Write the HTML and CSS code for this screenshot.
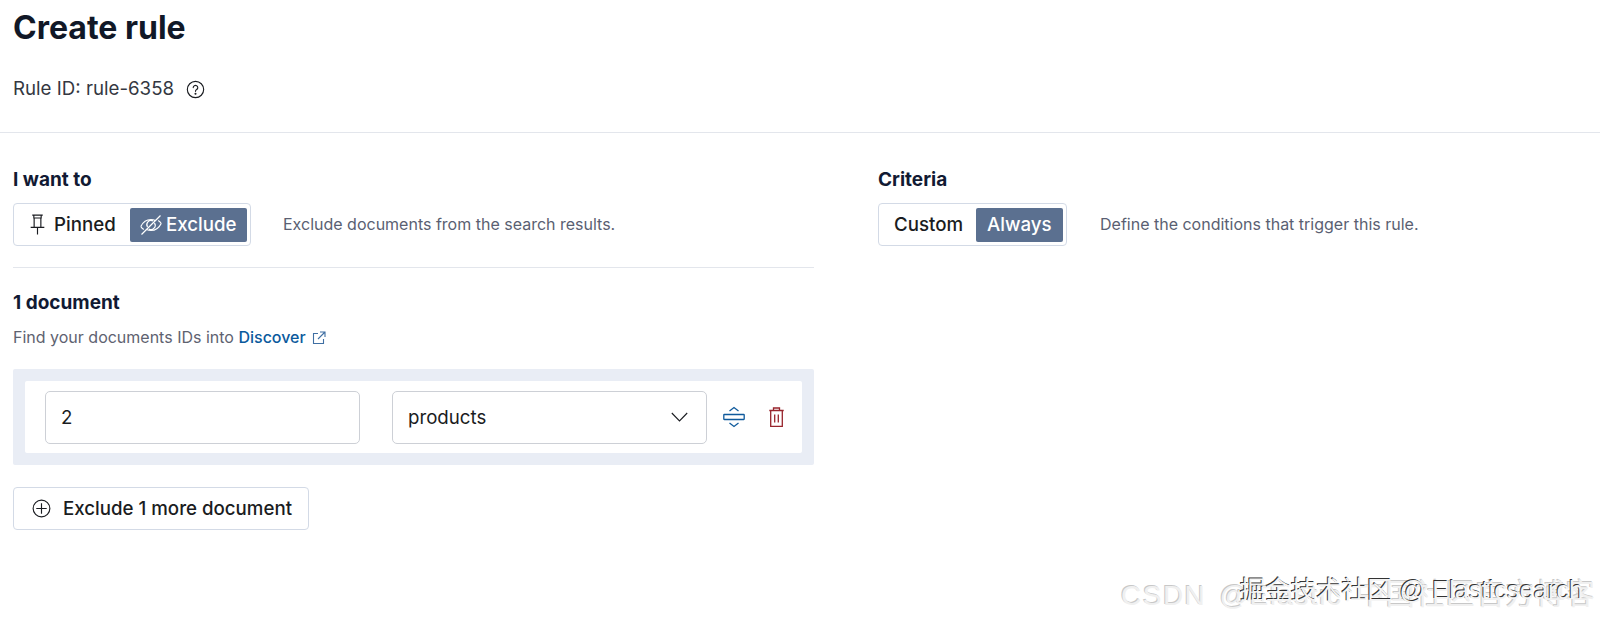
FILE: index.html
```html
<!DOCTYPE html>
<html lang="en">
<head>
<meta charset="utf-8">
<title>Create rule</title>
<link rel="stylesheet" href="styles.css">
</head>
<body>
<header class="page-header">
  <h1 class="title">Create rule</h1>
  <div class="rule-id">
    <span>Rule ID: rule-6358</span>
    <svg class="icon-help" viewBox="0 0 20 20" fill="none" stroke="#1a1c21" stroke-width="1.2"><circle cx="10" cy="10" r="8.6"/><path d="M7.6 8a2.4 2.4 0 1 1 3.6 2.1c-.8.5-1.200.9-1.200 1.800" stroke-linecap="round"/><circle cx="10" cy="14.400" r=".5" fill="#1a1c21"/></svg>
  </div>
</header>
<main class="columns">
  <section class="col-left">
    <h2 class="label">I want to</h2>
    <div class="choice-row">
      <div class="group">
        <span class="opt opt-pinned">
          <svg class="icon-pin" viewBox="0 0 14 20" fill="none" stroke="#1a1c21" stroke-width="1.100"><path d="M2 1h10M3.500 1v2.800h7V1M3.800 3.800v8.400M10.200 3.800v8.400M.5 12.700h13M7 12.700V19.500"/></svg>
          Pinned
        </span>
        <span class="opt selected opt-exclude">
          <svg class="icon-eye" viewBox="0 0 22 20" fill="none" stroke="#fff" stroke-width="1.200"><path d="M.8 11.500C3 7 7 4.500 11 4.500c1.500 0 3 .3 4.300 1M21.200 8.500C19 13 15 15.500 11 15.500c-1.500 0-3-.3-4.300-1M.8 11.500c.7 1.300 1.800 2.300 3 3.100M21.200 8.500c-.7-1.300-1.800-2.300-3-3.100M7.500 12a4.200 4.200 0 0 1 5.500-6M14.500 8a4.200 4.200 0 0 1-5.500 6M1.500 19.500 20.500.5"/></svg>
          Exclude
        </span>
      </div>
      <p class="hint">Exclude documents from the search results.</p>
    </div>
    <hr class="rule">
    <h2 class="label doc-label">1 document</h2>
    <p class="find">Find your documents IDs into <a class="link" href="#">Discover</a>
      <svg class="icon-ext" viewBox="0 0 14 14" fill="none" stroke="#3f6fa3" stroke-width="1.100"><path d="M6 2.500H1.500v10h10V8M8 1h5v5M13 1 6 8"/></svg>
    </p>
    <div class="panel">
      <div class="panel-inner">
        <div class="field">2</div>
        <div class="field field-select">
          <span>products</span>
          <svg class="icon-chev" viewBox="0 0 17 10" fill="none" stroke="#1a1c21" stroke-width="1.100"><path d="M.8 1l7.700 8 7.700-8"/></svg>
        </div>
        <svg class="icon-split" viewBox="0 0 22 22" fill="none" stroke="#0f5a9c" stroke-width="1.300"><path d="M6.500 5 11 1.500 15.500 5M6.500 17 11 20.500 15.500 17"/><rect x=".8" y="8.500" width="20.400" height="5" rx=".5"/></svg>
        <svg class="icon-trash" viewBox="0 0 15 20" fill="none" stroke="#98242c" stroke-width="1.300"><path d="M4.500 3V1h6v2M.3 3.500h14.400M1.700 3.500v15.800h11.600V3.500M5.700 7.500v8M9.300 7.500v8"/></svg>
      </div>
    </div>
    <button class="add-btn" type="button">
      <svg class="icon-plus" viewBox="0 0 20 20" fill="none" stroke="#1a1c21" stroke-width="1.200"><circle cx="10" cy="10" r="8.800"/><path d="M10 4.500v11M4.500 10h11"/></svg>
      Exclude 1 more document
    </button>
  </section>
  <section class="col-right">
    <h2 class="label">Criteria</h2>
    <div class="choice-row">
      <div class="group">
        <span class="opt opt-custom">Custom</span>
        <span class="opt selected opt-always">Always</span>
      </div>
      <p class="hint hint-right">Define the conditions that trigger this rule.</p>
    </div>
  </section>
</main>
<div class="wm wm-back">CSDN @Elastic <span class="wm-cjk">中国社区官方博客</span></div>
<div class="wm wm-front">掘金技术社区 @ Elasticsearch</div>
</body>
</html>
```
FILE: styles.css
```css
* { box-sizing: border-box; }
html, body { margin: 0; height: 623px; overflow: hidden; }
body {
  position: relative;
  background: #fff;
  color: #1a1c21;
  font-family: Inter, "Noto Sans CJK SC", sans-serif;
}
.page-header {
  height: 133px;
  padding: 8px 13px 0;
  border-bottom: 1px solid #e3e6ec;
}
.title {
  margin: 0;
  font-size: 32px;
  line-height: 40px;
  font-weight: 700;
  color: #111827;
}
.rule-id {
  display: flex;
  align-items: center;
  gap: 12px;
  margin-top: 29px;
  font-size: 18.700px;
  line-height: 24px;
  color: #343741;
}
.icon-help { width: 19px; height: 19px; }
.columns {
  display: flex;
  padding: 35px 0 0 13px;
  gap: 64px;
}
.col-left { width: 801px; }
.label {
  margin: 0;
  font-size: 19px;
  line-height: 24px;
  font-weight: 700;
  color: #111a33;
}
.choice-row {
  display: flex;
  align-items: center;
  gap: 32px;
  margin-top: 11px;
}
.group {
  display: flex;
  align-items: center;
  height: 43px;
  padding: 4px 3px 4px 0;
  background: #fff;
  border: 1px solid #d3dae6;
  border-radius: 4px;
  font-size: 18.700px;
  font-weight: 500;
}
.opt {
  display: flex;
  align-items: center;
  height: 34px;
}
.selected {
  background: #5b7090;
  color: #fff;
  border-radius: 2px;
}
.opt-pinned { width: 116px; padding-left: 16px; gap: 9px; }
.opt-exclude { width: 117px; padding-left: 10px; gap: 4px; }
.opt-custom { width: 97px; padding-left: 15px; }
.opt-always { width: 87px; padding-left: 11px; }
.icon-pin { width: 15px; height: 21px; }
.icon-eye { width: 22px; height: 20px; }
.hint {
  margin: -2px 0 0;
  font-size: 16px;
  color: #5a5f72;
}
.hint-right { margin-left: 1px; }
.rule {
  margin: 21px 0 0;
  border: 0;
  border-top: 1px solid #e3e6ec;
}
.doc-label { margin-top: 23px; }
.find {
  margin: 11px 0 0;
  font-size: 16px;
  line-height: 22px;
  color: #5e6270;
}
.link { color: #0b5a9d; text-decoration: none; font-weight: 500; }
.icon-ext { width: 14px; height: 14px; margin-left: 2px; vertical-align: -2px; }
.panel {
  margin-top: 21px;
  padding: 12px;
  background: #e9edf5;
  border-radius: 2px;
}
.panel-inner {
  display: flex;
  align-items: center;
  height: 72px;
  padding-left: 20px;
  background: #fff;
  border-radius: 2px;
}
.field {
  display: flex;
  flex: none;
  align-items: center;
  justify-content: space-between;
  width: 315px;
  height: 53px;
  padding: 0 15px;
  border: 1px solid #cdd0d6;
  border-radius: 5px;
  font-size: 18.700px;
  color: #1a1c21;
}
.field-select { margin-left: 32px; padding-right: 18px; }
.icon-chev { width: 17px; height: 10px; }
.icon-split { flex: none; width: 22px; height: 22px; margin-left: 16px; }
.icon-trash { flex: none; width: 15px; height: 20px; margin-left: 24px; }
.add-btn {
  display: flex;
  align-items: center;
  gap: 12px;
  width: 296px;
  height: 43px;
  margin-top: 22px;
  padding: 0 0 0 18px;
  background: #fff;
  border: 1px solid #d3dae6;
  border-radius: 4px;
  font: 500 18.700px Inter, sans-serif;
  color: #1a1c21;
}
.icon-plus { width: 19px; height: 19px; }
.wm {
  position: absolute;
  white-space: nowrap;
  font-family: "Liberation Sans", "Noto Sans CJK SC", sans-serif;
  line-height: 32px;
}
.wm-back {
  left: 1121px;
  top: 579px;
  font-size: 28px;
  letter-spacing: 1.500px;
  word-spacing: 4px;
  color: #f0f0f0;
  text-shadow: -1px -1px 0 #c8c8c8;
}
.wm-cjk { font-size: 29px; letter-spacing: 1px; }
.wm-front {
  left: 1240px;
  top: 574px;
  font-size: 25.400px;
  color: #f4f4f4;
  text-shadow: -1px -1px 0 #333;
}
```
